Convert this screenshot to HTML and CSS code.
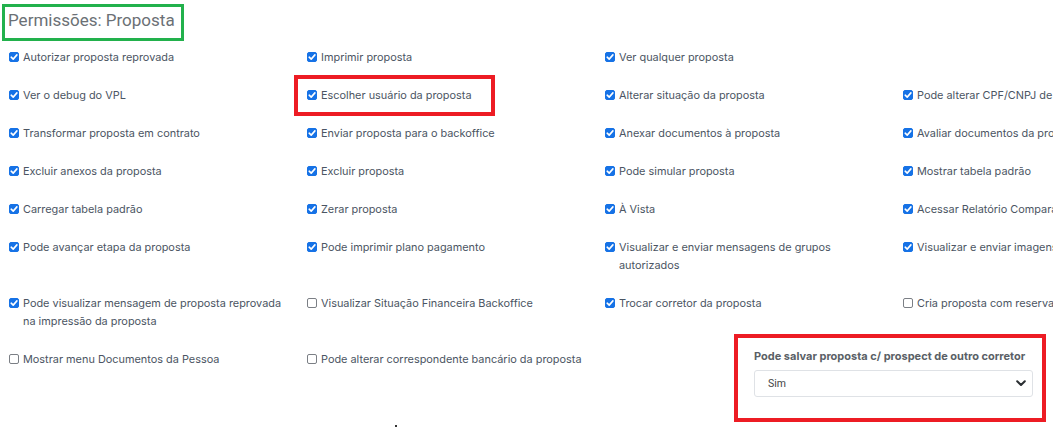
FILE: index.html
```html
<!DOCTYPE html>
<html lang="pt-BR">
<head>
<meta charset="utf-8">
<title>Permissões: Proposta</title>
<link rel="stylesheet" href="styles.css">
</head>
<body>
<div class="page">
  <h1 class="title">Permissões: Proposta</h1>
  <div class="grid">
    <label class="item"><span class="cb on"></span><span class="txt">Autorizar proposta reprovada</span></label>
    <label class="item"><span class="cb on"></span><span class="txt">Imprimir proposta</span></label>
    <label class="item"><span class="cb on"></span><span class="txt">Ver qualquer proposta</span></label>
    <div class="item empty"></div>

    <label class="item"><span class="cb on"></span><span class="txt">Ver o debug do VPL</span></label>
    <label class="item"><span class="cb on"></span><span class="txt">Escolher usuário da proposta</span></label>
    <label class="item"><span class="cb on"></span><span class="txt">Alterar situação da proposta</span></label>
    <label class="item"><span class="cb on"></span><span class="txt">Pode alterar CPF/CNPJ de prospect da proposta</span></label>

    <label class="item"><span class="cb on"></span><span class="txt">Transformar proposta em contrato</span></label>
    <label class="item"><span class="cb on"></span><span class="txt">Enviar proposta para o backoffice</span></label>
    <label class="item"><span class="cb on"></span><span class="txt">Anexar documentos à proposta</span></label>
    <label class="item"><span class="cb on"></span><span class="txt">Avaliar documentos da proposta</span></label>

    <label class="item"><span class="cb on"></span><span class="txt">Excluir anexos da proposta</span></label>
    <label class="item"><span class="cb on"></span><span class="txt">Excluir proposta</span></label>
    <label class="item"><span class="cb on"></span><span class="txt">Pode simular proposta</span></label>
    <label class="item"><span class="cb on"></span><span class="txt">Mostrar tabela padrão</span></label>

    <label class="item"><span class="cb on"></span><span class="txt">Carregar tabela padrão</span></label>
    <label class="item"><span class="cb on"></span><span class="txt">Zerar proposta</span></label>
    <label class="item"><span class="cb on"></span><span class="txt">À Vista</span></label>
    <label class="item"><span class="cb on"></span><span class="txt">Acessar Relatório Comparativo</span></label>

    <label class="item"><span class="cb on"></span><span class="txt">Pode avançar etapa da proposta</span></label>
    <label class="item"><span class="cb on"></span><span class="txt">Pode imprimir plano pagamento</span></label>
    <label class="item"><span class="cb on"></span><span class="txt">Visualizar e enviar mensagens de grupos autorizados</span></label>
    <label class="item"><span class="cb on"></span><span class="txt">Visualizar e enviar imagens</span></label>

    <label class="item"><span class="cb on"></span><span class="txt">Pode visualizar mensagem de proposta reprovada na impressão da proposta</span></label>
    <label class="item"><span class="cb"></span><span class="txt">Visualizar Situação Financeira Backoffice</span></label>
    <label class="item"><span class="cb on"></span><span class="txt">Trocar corretor da proposta</span></label>
    <label class="item"><span class="cb"></span><span class="txt">Cria proposta com reserva</span></label>

    <label class="item"><span class="cb"></span><span class="txt">Mostrar menu Documentos da Pessoa</span></label>
    <label class="item"><span class="cb"></span><span class="txt">Pode alterar correspondente bancário da proposta</span></label>
    <div class="field">
      <div class="field-label">Pode salvar proposta c/ prospect de outro corretor</div>
      <div class="select">
        <span class="select-value">Sim</span>
        <svg class="chev" width="10" height="7" viewBox="0 0 10 7"><path d="M1.2 1.3 L5 5 L8.8 1.3" fill="none" stroke="#2b2f33" stroke-width="2.1" stroke-linecap="round" stroke-linejoin="round"/></svg>
      </div>
    </div>
  </div>
  <div class="dot"></div>
</div>
<div class="mark green"></div>
<div class="mark red r1"></div>
<div class="mark red r2"></div>
</body>
</html>
```
FILE: styles.css
```css
html, body {
  margin: 0;
  padding: 0;
  overflow: hidden;
  background: #ffffff;
}
body {
  width: 1053px;
  height: 436px;
  position: relative;
  font-family: Inter, "Noto Sans", "Liberation Sans", sans-serif;
  color: #4b5563;
}
.page {
  padding: 9px 0 0 8px;
}
.title {
  margin: 0;
  font-family: Roboto, "Liberation Sans", sans-serif;
  font-weight: 400;
  font-size: 17px;
  line-height: 22px;
  color: #6b7075;
}
.grid {
  margin-top: 17px;
  display: grid;
  grid-template-columns: repeat(4, 298px);
  row-gap: 20px;
  width: 1192px;
}
.item {
  display: flex;
  align-items: flex-start;
  font-size: 10.9px;
  line-height: 18px;
  padding-right: 16px;
}
.cb {
  flex: none;
  width: 10px;
  height: 10px;
  margin: 4px 4px 0 1px;
  box-sizing: border-box;
  border: 1px solid #7b7f85;
  border-radius: 2px;
  background: #fff;
}
.cb.on {
  border-color: #1672e6;
  background: #1672e6 url("data:image/svg+xml,%3Csvg xmlns='http://www.w3.org/2000/svg' viewBox='0 0 10 10'%3E%3Cpath d='M2.2 5.2 L4.2 7.1 L7.9 2.9' fill='none' stroke='white' stroke-width='1.6' stroke-linecap='round' stroke-linejoin='round'/%3E%3C/svg%3E") center / 10px 10px no-repeat;
}
.field {
  grid-column: 3 / span 2;
  margin-left: 150px;
  margin-top: -1px;
  width: 279px;
}
.field-label {
  font-size: 11px;
  font-weight: 700;
  line-height: 14px;
  color: #5a5f66;
  margin-bottom: 7px;
  white-space: nowrap;
}
.select {
  height: 27px;
  box-sizing: border-box;
  border: 1px solid #dfe2e6;
  border-radius: 3px;
  display: flex;
  align-items: center;
  justify-content: space-between;
  padding: 0 6px 0 13px;
}
.select-value {
  font-family: Roboto, "Liberation Sans", sans-serif;
  font-size: 10.5px;
  color: #444;
}
.dot {
  width: 2px;
  height: 2px;
  background: #333;
  margin: 28px 0 0 387px;
}
.mark {
  position: absolute;
  box-sizing: border-box;
}
.green {
  left: 2px;
  top: 4px;
  width: 182px;
  height: 37px;
  border: 3px solid #22b14c;
}
.red {
  border: 4px solid #ed1c24;
}
.r1 {
  left: 294px;
  top: 75px;
  width: 201px;
  height: 41px;
}
.r2 {
  left: 734px;
  top: 334px;
  width: 312px;
  height: 88px;
}
```
